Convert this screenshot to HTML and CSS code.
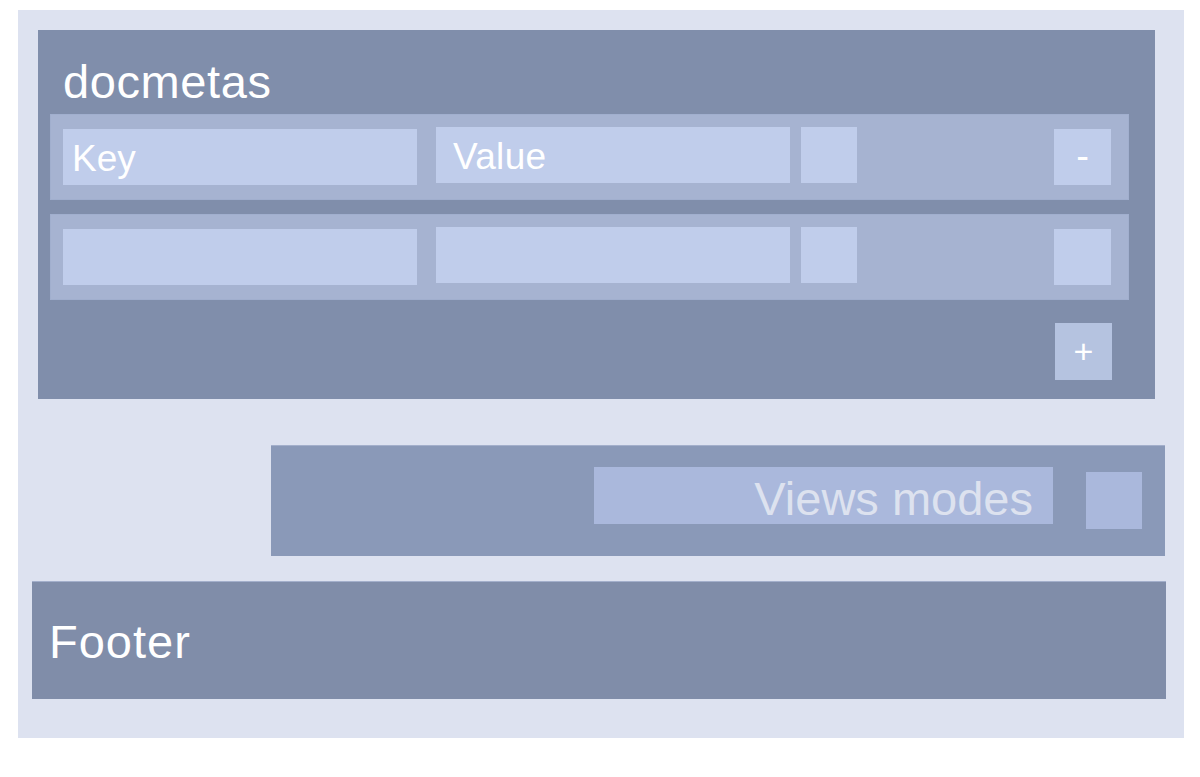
FILE: index.html
```html
<!DOCTYPE html>
<html lang="en">
<head>
<meta charset="utf-8">
<title>docmetas</title>
<link rel="stylesheet" href="styles.css">
</head>
<body>
<div class="page">
  <section class="docmetas">
    <h1 class="title">docmetas</h1>
    <div class="meta-row">
      <div class="field key">Key</div>
      <div class="field value">Value</div>
      <div class="square"></div>
      <div class="spacer"></div>
      <div class="btn minus">-</div>
    </div>
    <div class="meta-row">
      <div class="field key"></div>
      <div class="field value"></div>
      <div class="square"></div>
      <div class="spacer"></div>
      <div class="btn minus"></div>
    </div>
    <div class="add-row">
      <div class="btn plus">+</div>
    </div>
  </section>
  <section class="views">
    <div class="views-field">Views modes</div>
    <div class="views-square"></div>
  </section>
  <footer class="footer">Footer</footer>
</div>
</body>
</html>
```
FILE: styles.css
```css
html, body {
  margin: 0;
  padding: 0;
  background: #ffffff;
}

body {
  font-family: "Liberation Sans", Arial, sans-serif;
  color: #ffffff;
}

.page {
  margin: 10px 0 0 18px;
  width: 1166px;
  height: 728px;
  background: #dde2f0;
  box-sizing: border-box;
  padding-top: 20px;
  display: flex;
  flex-direction: column;
}

.docmetas {
  margin-left: 20px;
  width: 1117px;
  height: 369px;
  box-sizing: border-box;
  background: #808eab;
  padding: 25px 26px 0 12px;
  display: flex;
  flex-direction: column;
}

.title {
  margin: 0 0 5px 0;
  padding-left: 13px;
  font-size: 47px;
  font-weight: normal;
  letter-spacing: 0.6px;
  line-height: 52px;
  height: 54px;
  box-sizing: border-box;
  padding-top: 1px;
}

.meta-row {
  height: 86px;
  box-sizing: border-box;
  background: #a6b3d1;
  border: 1px solid #a1afce;
  display: flex;
  align-items: flex-start;
  padding: 0 17px 0 12px;
  margin-bottom: 14px;
}

.meta-row + .meta-row {
  margin-bottom: 0;
}

.field {
  width: 354px;
  height: 56px;
  background: #c0cdeb;
  box-sizing: border-box;
  font-size: 37px;
  line-height: 53px;
  padding-top: 3px;
}

.key {
  margin-top: 14px;
  padding-left: 9px;
}

.value {
  margin-top: 12px;
  margin-left: 19px;
  padding-left: 17px;
  letter-spacing: 0.3px;
}

.square {
  width: 56px;
  height: 56px;
  margin-top: 12px;
  margin-left: 11px;
  background: #c0cdeb;
}

.spacer {
  flex: 1;
}

.btn {
  width: 57px;
  height: 56px;
  text-align: center;
  font-size: 34px;
  line-height: 56px;
}

.minus {
  margin-top: 14px;
  background: #c0cdeb;
  font-size: 38px;
  line-height: 54px;
}

.add-row {
  display: flex;
  justify-content: flex-end;
  padding-top: 23px;
  padding-right: 17px;
}

.plus {
  background: #b5c3e0;
  height: 57px;
  line-height: 57px;
}

.views {
  margin: 46px 0 0 253px;
  width: 894px;
  height: 111px;
  box-sizing: border-box;
  background: #8a99b8;
  border-top: 1px solid #a3afcb;
  display: flex;
  align-items: flex-start;
  justify-content: flex-end;
  padding: 21px 23px 0 0;
}

.views-field {
  width: 459px;
  height: 57px;
  box-sizing: border-box;
  background: #aab8dc;
  color: #dde2ef;
  font-size: 47px;
  line-height: 51px;
  padding: 6px 20px 0 0;
  text-align: right;
}

.views-square {
  width: 56px;
  height: 57px;
  margin: 5px 0 0 33px;
  background: #aab8dc;
}

.footer {
  margin: 25px 0 0 14px;
  width: 1134px;
  height: 118px;
  box-sizing: border-box;
  background: #808da9;
  border-top: 1px solid #a3afcb;
  font-size: 47px;
  letter-spacing: 1px;
  line-height: 113px;
  padding: 3px 0 0 17px;
}
```
